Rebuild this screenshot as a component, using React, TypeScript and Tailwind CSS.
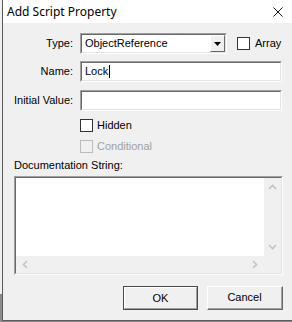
import React from 'react'

const font = { fontFamily: '"Liberation Sans", Arial, sans-serif' }

function Sunken({ className, children }: { className: string; children?: React.ReactNode }) {
  return (
    <div className={`border-t border-l border-t-[#a0a0a0] border-l-[#a0a0a0] border-b border-r border-b-white border-r-white ${className}`}>
      <div className="w-full h-full border-t border-l border-t-[#696969] border-l-[#696969] border-b border-r border-b-[#e3e3e3] border-r-[#e3e3e3] bg-white flex">
        {children}
      </div>
    </div>
  )
}

function CheckBox({ disabled }: { disabled?: boolean }) {
  return (
    <div
      className={`w-[13px] h-[13px] border shrink-0 ${
        disabled ? 'border-[#bcbcbc] bg-[#f0f0f0]' : 'border-[#333333] bg-white'
      }`}
    />
  )
}

function Chevron({ dir }: { dir: 'up' | 'down' | 'left' | 'right' }) {
  const d = {
    up: 'M1 5 L4.5 1.5 L8 5',
    down: 'M1 2 L4.5 5.5 L8 2',
    left: 'M5 1 L1.5 4.5 L5 8',
    right: 'M2 1 L5.5 4.5 L2 8',
  }[dir]
  const vertical = dir === 'up' || dir === 'down'
  return (
    <svg width={vertical ? 9 : 7} height={vertical ? 7 : 9} viewBox={vertical ? '0 0 9 7' : '0 0 7 9'}>
      <path d={d} fill="none" stroke="#c2c2c2" strokeWidth="1.6" />
    </svg>
  )
}

export default function App() {
  return (
    <div className="w-[292px] h-[322px] bg-[#8a8a8a] flex overflow-hidden text-[11px] text-black" style={font}>
      <div className="w-[2px] flex flex-col">
        <div className="h-[294px] bg-[#f0f0f0]" />
      </div>

      <div className="w-[290px] h-[321px] border-l border-b border-[#5a5a5a] bg-[#f0f0f0] flex flex-col">
        {/* title bar */}
        <div className="h-[23px] bg-white flex items-center justify-between pl-[4px] pr-[9px] shrink-0">
          <span className="text-[12px] leading-none pt-[1px]" style={{ fontFamily: '"Noto Sans", "Open Sans", sans-serif' }}>
            Add Script Property
          </span>
          <svg width="10" height="10" viewBox="0 0 10 10" className="mt-[1px]">
            <path d="M0.5 0.5 L9.5 9.5 M9.5 0.5 L0.5 9.5" stroke="#111" strokeWidth="1" />
          </svg>
        </div>

        <div className="pl-[11px] flex flex-col">
          {/* Type */}
          <div className="mt-[10px] flex items-center h-[21px]">
            <div className="w-[59px] text-right">Type:</div>
            <Sunken className="ml-[7px] w-[147px] h-[21px]">
              <div className="flex-1 flex items-center pl-[3px]">ObjectReference</div>
              <div className="w-[15px] h-full border-t border-l border-white border-b border-r border-b-[#696969] border-r-[#696969] bg-[#f0f0f0] flex items-center justify-center">
                <svg width="7" height="4" viewBox="0 0 7 4">
                  <path d="M0 0 L7 0 L3.5 4 Z" fill="#000" />
                </svg>
              </div>
            </Sunken>
            <div className="ml-[10px] flex items-center gap-[5px]">
              <CheckBox />
              <span>Array</span>
            </div>
          </div>

          {/* Name */}
          <div className="mt-[7px] flex items-center h-[21px]">
            <div className="w-[59px] text-right">Name:</div>
            <Sunken className="ml-[7px] w-[202px] h-[21px]">
              <div className="flex items-center pl-[3px]">
                <span>Lock</span>
                <span className="ml-[1px] w-px h-[13px] bg-black" />
              </div>
            </Sunken>
          </div>

          {/* Initial Value */}
          <div className="mt-[8px] flex items-center h-[21px]">
            <div className="w-[59px] text-right whitespace-nowrap">Initial Value:</div>
            <Sunken className="ml-[7px] w-[202px] h-[21px]" />
          </div>

          {/* Hidden */}
          <div className="mt-[8px] ml-[66px] flex items-center gap-[4px] h-[13px]">
            <CheckBox />
            <span>Hidden</span>
          </div>

          {/* Conditional */}
          <div className="mt-[8px] ml-[66px] flex items-center gap-[4px] h-[13px]">
            <CheckBox disabled />
            <span className="text-[#a0a0a0]">Conditional</span>
          </div>

          <div className="mt-[6px] h-[13px] leading-[13px]">Documentation String:</div>

          {/* documentation box */}
          <div className="mt-[4px] w-[269px] h-[99px] border-t border-l border-t-[#a0a0a0] border-l-[#a0a0a0] border-b border-r border-b-white border-r-white">
            <div className="w-full h-full border-t border-l border-t-[#696969] border-l-[#696969] border-b border-r border-b-[#e3e3e3] border-r-[#e3e3e3] grid grid-cols-[1fr_17px] grid-rows-[1fr_17px]">
              <div className="bg-white" />
              <div className="bg-[#f0f0f0] flex flex-col items-center justify-between py-[6px]">
                <Chevron dir="up" />
                <Chevron dir="down" />
              </div>
              <div className="bg-[#f0f0f0] flex items-center justify-between px-[6px]">
                <Chevron dir="left" />
                <Chevron dir="right" />
              </div>
              <div className="bg-[#f0f0f0]" />
            </div>
          </div>

          {/* buttons */}
          <div className="mt-[11px] w-[269px] flex justify-end gap-[9px]">
            <div className="w-[75px] h-[24px] border border-[#4a4a4a]">
              <div className="w-full h-full border-t border-l border-white border-b border-r border-b-[#a0a0a0] border-r-[#a0a0a0] flex items-center justify-center">
                OK
              </div>
            </div>
            <div className="w-[76px] h-[24px] border-t border-l border-white border-b border-r border-b-[#696969] border-r-[#696969]">
              <div className="w-full h-full border-b border-r border-b-[#a0a0a0] border-r-[#a0a0a0] flex items-center justify-center">
                Cancel
              </div>
            </div>
          </div>
        </div>
      </div>
    </div>
  )
}
